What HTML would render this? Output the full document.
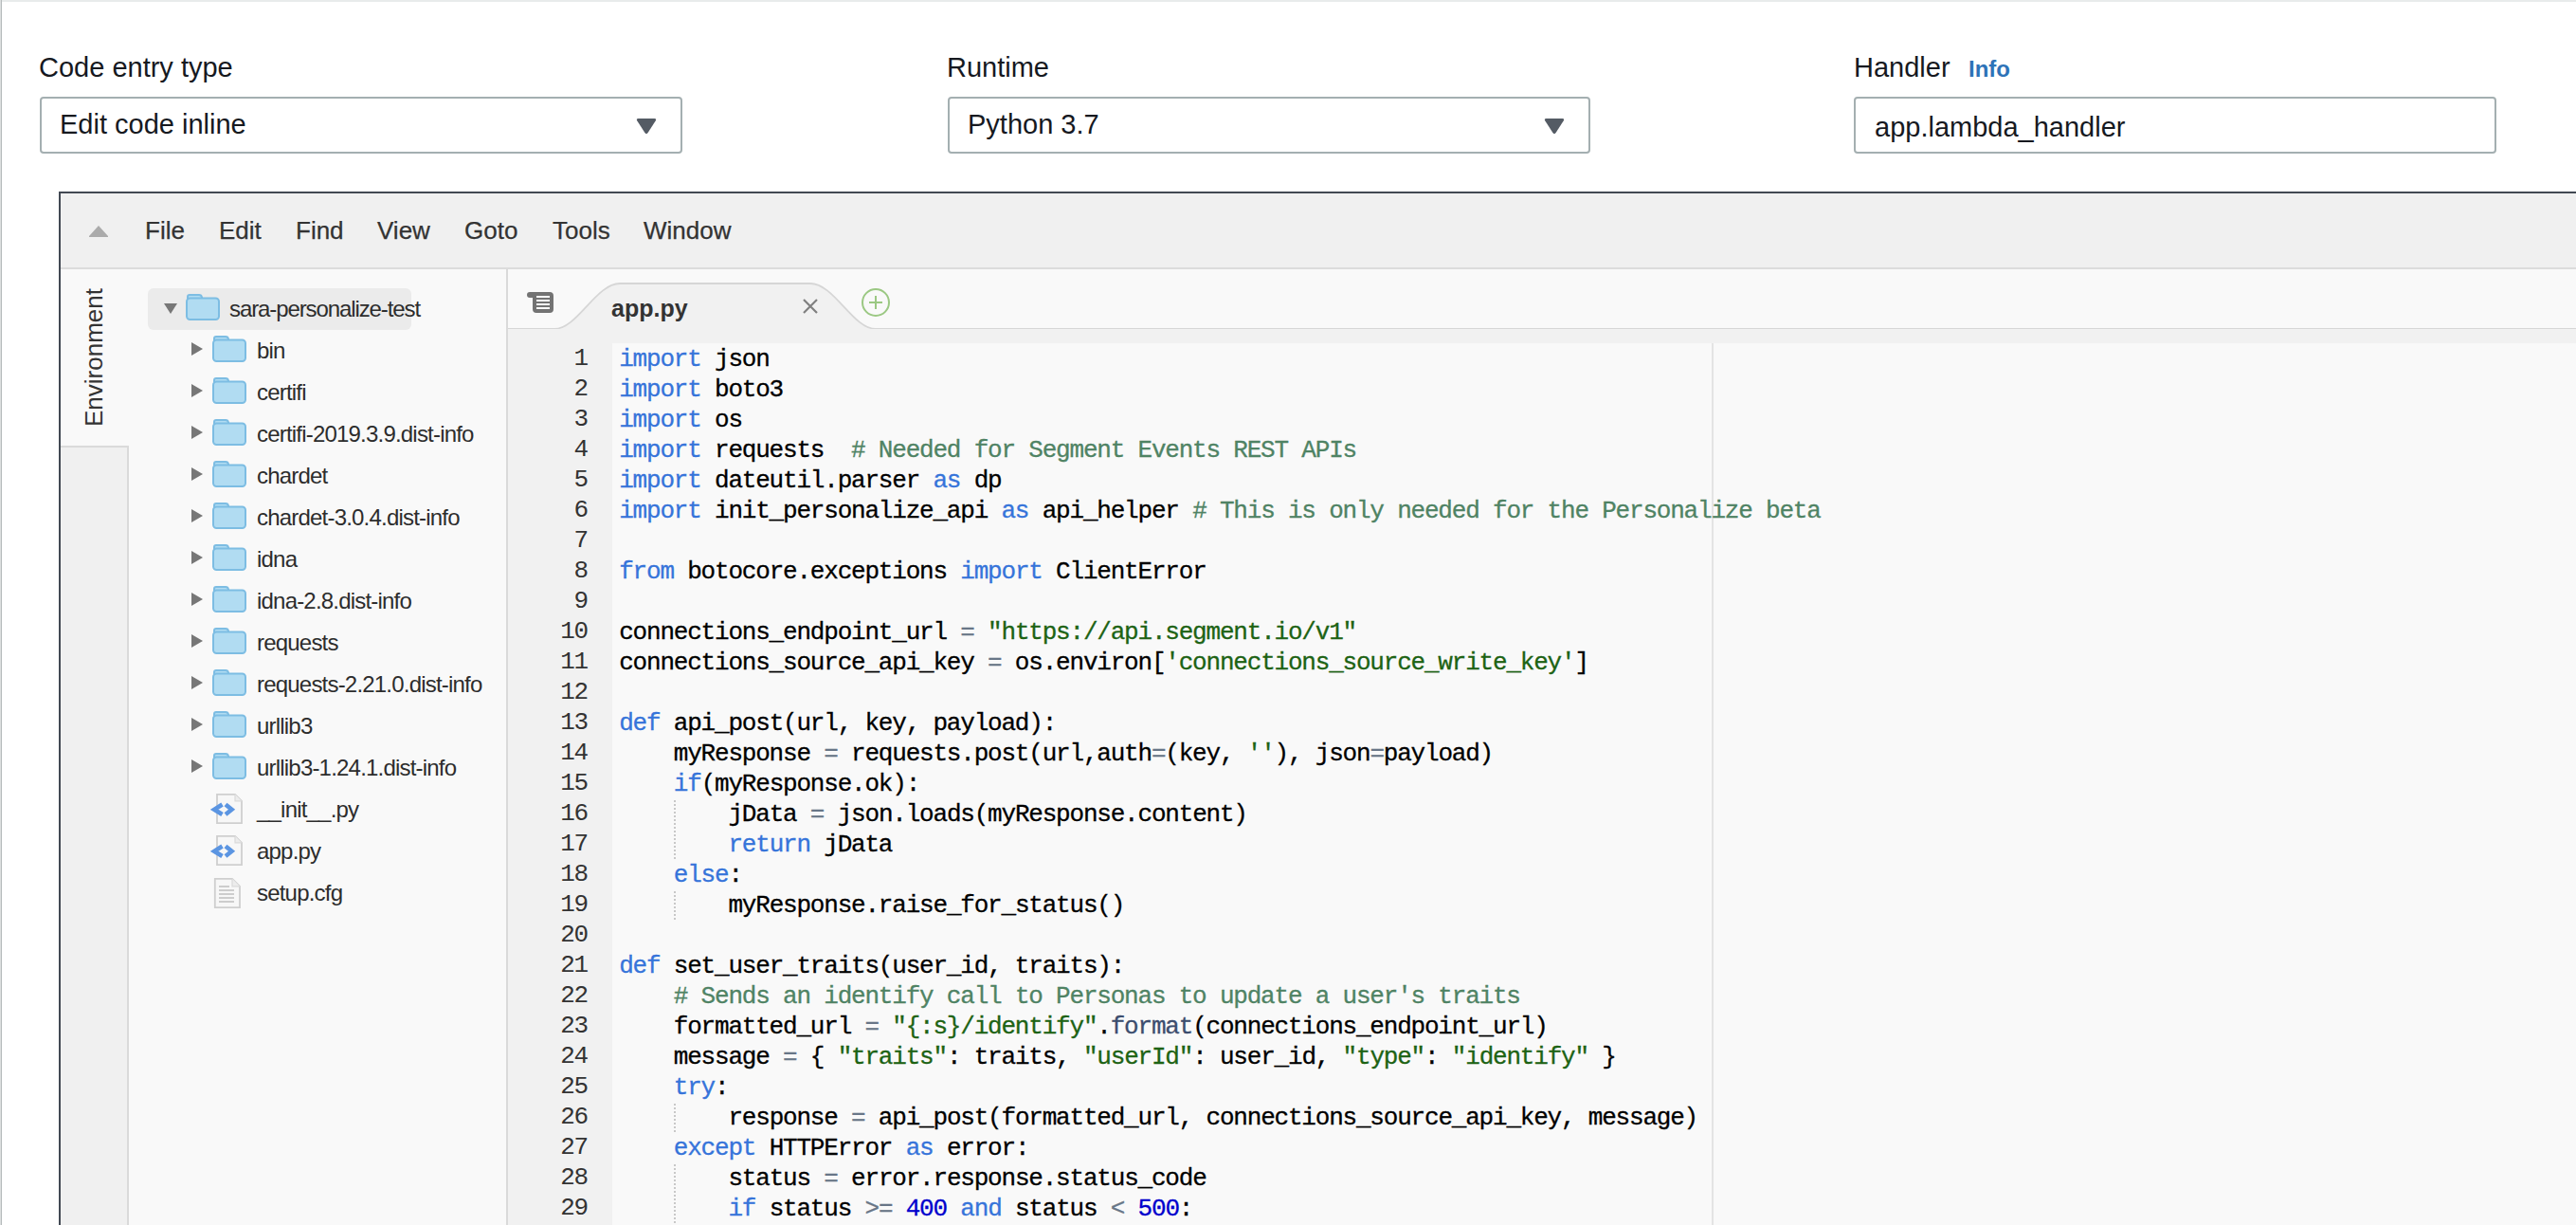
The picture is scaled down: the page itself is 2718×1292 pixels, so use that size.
<!DOCTYPE html>
<html><head><meta charset="utf-8"><style>
html,body{margin:0;padding:0}
body{width:2718px;height:1292px;overflow:hidden;background:#fff;position:relative;font-family:"Liberation Sans",sans-serif}
.abs{position:absolute}
.lbl{position:absolute;font-size:29px;color:#16191f;line-height:34px;white-space:nowrap}
.box{position:absolute;top:102px;width:674px;height:56px;border:2px solid #a4afb1;border-radius:4px;background:#fff}
.box .v{position:absolute;left:19px;top:10px;font-size:29px;line-height:34px;color:#16191f;white-space:nowrap}
.arr{position:absolute;top:19px}
#ide{position:absolute;left:62px;top:202px;width:2656px;height:1090px;border-left:2px solid #424953;border-top:2px solid #424953;background:#f9f9f9;overflow:hidden}
#menu{position:absolute;left:0;top:0;right:0;height:78px;background:#f0f0f0;border-bottom:2px solid #dcdcdc}
.mi{position:absolute;top:24px;font-size:26px;line-height:30px;color:#333;white-space:nowrap;-webkit-text-stroke:0.25px #333}
#strip{position:absolute;left:0;top:266px;width:72px;height:900px;background:#f0f0f0;border-top:2px solid #dadada;border-right:2px solid #dadada;box-sizing:border-box}
#envtxt{position:absolute;left:20px;top:246px;transform-origin:0 0;transform:rotate(-90deg);font-size:26px;line-height:30px;color:#333;white-space:nowrap}
#tree{position:absolute;left:72px;top:80px;width:398px;height:1100px}
#sep{position:absolute;left:470px;top:80px;width:2px;height:1100px;background:#dadada}
.sel{position:absolute;width:278px;height:44px;background:#ebebeb;border-radius:6px}
.tri-d{position:absolute;width:0;height:0;border-left:7px solid transparent;border-right:7px solid transparent;border-top:11px solid #777}
.tri-r{position:absolute;width:0;height:0;border-top:7px solid transparent;border-bottom:7px solid transparent;border-left:12px solid #777}
.ic{position:absolute;line-height:0}
.tl{position:absolute;font-size:24px;line-height:44px;color:#2d2d2d;white-space:nowrap;letter-spacing:-0.8px}
#tabbar{position:absolute;left:472px;top:80px;right:0;height:64px;background:#f9f9f9}
#gutter{position:absolute;left:472px;top:143px;width:110px;height:1000px;background:#f1f1f1}
#gutbg2{position:absolute;left:582px;top:143px;right:0;height:15px;background:#f1f1f1}
#codebg{position:absolute;left:582px;top:158px;right:0;height:1000px;background:#f9f9f9;border-top-left-radius:6px}
.gn{height:32px;line-height:32px;text-align:right;font-family:"Liberation Mono",monospace;font-size:26px;letter-spacing:-1.2px;color:#333}
#gnums{position:absolute;left:472px;top:158px;width:84px}
#code{position:absolute;left:589.2px;top:159px;font-family:"Liberation Mono",monospace;font-size:26px;letter-spacing:-1.2px;color:#000;white-space:pre;-webkit-text-stroke:0.3px currentColor}
.ln{height:32px;line-height:32px}
.k{color:#3674da}
.s{color:#1d6314}
.c{color:#4f8364}
.n{color:#0000cd}
.o{color:#687687}
.f{color:#3c4d6e}
.ig{background-image:linear-gradient(#c8c8c8 50%, transparent 50%);background-size:1.5px 4px;background-repeat:repeat-y;background-position:left top}
#margin{position:absolute;left:1742px;top:158px;width:2px;height:1000px;background:#e4e4e4}
</style></head><body>
<div class="abs" style="left:0;top:0;width:2718px;height:2px;background:#e8ebeb"></div>
<div class="abs" style="left:0;top:0;width:1px;height:1292px;background:#dcdfdf"></div>
<div class="abs" style="left:1px;top:0;width:1px;height:1292px;background:#b6bbbc"></div>

<div class="lbl" style="left:41px;top:54px">Code entry type</div>
<div class="box" style="left:42px"><div class="v">Edit code inline</div>
<svg class="arr" style="left:626px" width="24" height="20" viewBox="0 0 24 20"><path d="M3.5 2 L20.5 2 Q23 2 21.8 4.2 L13.6 17 Q12 19.3 10.4 17 L2.2 4.2 Q1 2 3.5 2Z" fill="#545b64"/></svg></div>

<div class="lbl" style="left:999px;top:54px">Runtime</div>
<div class="box" style="left:1000px"><div class="v">Python 3.7</div>
<svg class="arr" style="left:626px" width="24" height="20" viewBox="0 0 24 20"><path d="M3.5 2 L20.5 2 Q23 2 21.8 4.2 L13.6 17 Q12 19.3 10.4 17 L2.2 4.2 Q1 2 3.5 2Z" fill="#545b64"/></svg></div>

<div class="lbl" style="left:1956px;top:54px">Handler</div>
<div class="lbl" style="left:2077px;top:56px;font-size:24px;font-weight:bold;color:#2e73b8">Info</div>
<div class="box" style="left:1956px"><div class="v" style="left:20px;top:13px">app.lambda_handler</div></div>

<div id="ide">
  <div id="menu">
    <svg class="abs" style="left:28px;top:33px" width="24" height="15" viewBox="0 0 24 15"><path d="M12 1 L22 12 L22 13 L2 13 L2 12 Z" fill="#ababab"/></svg>
    <div class="mi" style="left:89px">File</div>
    <div class="mi" style="left:167px">Edit</div>
    <div class="mi" style="left:248px">Find</div>
    <div class="mi" style="left:334px">View</div>
    <div class="mi" style="left:426px">Goto</div>
    <div class="mi" style="left:519px">Tools</div>
    <div class="mi" style="left:615px">Window</div>
  </div>
  <div class="abs" style="left:0;top:80px;width:72px;height:188px;background:#f9f9f9"></div>
  <div id="strip"></div>
  <div id="envtxt">Environment</div>
  <div id="tree"><div class="sel" style="top:20px;left:20px"></div>
<div class="tri-d" style="top:36px;left:37px"></div>
<div class="ic" style="top:26px;left:60px"><svg class="fi" width="36" height="28" viewBox="0 0 36 28"><path d="M4 1 L14 1 Q16.6 1 17 3.6 L17 8 L2 8 L2 3 Q2 1 4 1Z" fill="#b1dcf2" stroke="#7dbde3" stroke-width="2"/><rect x="1" y="4.5" width="34" height="22.5" rx="3.5" fill="#b1dcf2" stroke="#7dbde3" stroke-width="2"/></svg></div>
<div class="tl" style="top:20px;left:106px;letter-spacing:-1.1px">sara-personalize-test</div>
<div class="tri-r" style="top:77px;left:66px"></div>
<div class="ic" style="top:70px;left:88px"><svg class="fi" width="36" height="28" viewBox="0 0 36 28"><path d="M4 1 L14 1 Q16.6 1 17 3.6 L17 8 L2 8 L2 3 Q2 1 4 1Z" fill="#b1dcf2" stroke="#7dbde3" stroke-width="2"/><rect x="1" y="4.5" width="34" height="22.5" rx="3.5" fill="#b1dcf2" stroke="#7dbde3" stroke-width="2"/></svg></div>
<div class="tl" style="top:64px;left:135px">bin</div>
<div class="tri-r" style="top:121px;left:66px"></div>
<div class="ic" style="top:114px;left:88px"><svg class="fi" width="36" height="28" viewBox="0 0 36 28"><path d="M4 1 L14 1 Q16.6 1 17 3.6 L17 8 L2 8 L2 3 Q2 1 4 1Z" fill="#b1dcf2" stroke="#7dbde3" stroke-width="2"/><rect x="1" y="4.5" width="34" height="22.5" rx="3.5" fill="#b1dcf2" stroke="#7dbde3" stroke-width="2"/></svg></div>
<div class="tl" style="top:108px;left:135px">certifi</div>
<div class="tri-r" style="top:165px;left:66px"></div>
<div class="ic" style="top:158px;left:88px"><svg class="fi" width="36" height="28" viewBox="0 0 36 28"><path d="M4 1 L14 1 Q16.6 1 17 3.6 L17 8 L2 8 L2 3 Q2 1 4 1Z" fill="#b1dcf2" stroke="#7dbde3" stroke-width="2"/><rect x="1" y="4.5" width="34" height="22.5" rx="3.5" fill="#b1dcf2" stroke="#7dbde3" stroke-width="2"/></svg></div>
<div class="tl" style="top:152px;left:135px">certifi-2019.3.9.dist-info</div>
<div class="tri-r" style="top:209px;left:66px"></div>
<div class="ic" style="top:202px;left:88px"><svg class="fi" width="36" height="28" viewBox="0 0 36 28"><path d="M4 1 L14 1 Q16.6 1 17 3.6 L17 8 L2 8 L2 3 Q2 1 4 1Z" fill="#b1dcf2" stroke="#7dbde3" stroke-width="2"/><rect x="1" y="4.5" width="34" height="22.5" rx="3.5" fill="#b1dcf2" stroke="#7dbde3" stroke-width="2"/></svg></div>
<div class="tl" style="top:196px;left:135px">chardet</div>
<div class="tri-r" style="top:253px;left:66px"></div>
<div class="ic" style="top:246px;left:88px"><svg class="fi" width="36" height="28" viewBox="0 0 36 28"><path d="M4 1 L14 1 Q16.6 1 17 3.6 L17 8 L2 8 L2 3 Q2 1 4 1Z" fill="#b1dcf2" stroke="#7dbde3" stroke-width="2"/><rect x="1" y="4.5" width="34" height="22.5" rx="3.5" fill="#b1dcf2" stroke="#7dbde3" stroke-width="2"/></svg></div>
<div class="tl" style="top:240px;left:135px">chardet-3.0.4.dist-info</div>
<div class="tri-r" style="top:297px;left:66px"></div>
<div class="ic" style="top:290px;left:88px"><svg class="fi" width="36" height="28" viewBox="0 0 36 28"><path d="M4 1 L14 1 Q16.6 1 17 3.6 L17 8 L2 8 L2 3 Q2 1 4 1Z" fill="#b1dcf2" stroke="#7dbde3" stroke-width="2"/><rect x="1" y="4.5" width="34" height="22.5" rx="3.5" fill="#b1dcf2" stroke="#7dbde3" stroke-width="2"/></svg></div>
<div class="tl" style="top:284px;left:135px">idna</div>
<div class="tri-r" style="top:341px;left:66px"></div>
<div class="ic" style="top:334px;left:88px"><svg class="fi" width="36" height="28" viewBox="0 0 36 28"><path d="M4 1 L14 1 Q16.6 1 17 3.6 L17 8 L2 8 L2 3 Q2 1 4 1Z" fill="#b1dcf2" stroke="#7dbde3" stroke-width="2"/><rect x="1" y="4.5" width="34" height="22.5" rx="3.5" fill="#b1dcf2" stroke="#7dbde3" stroke-width="2"/></svg></div>
<div class="tl" style="top:328px;left:135px">idna-2.8.dist-info</div>
<div class="tri-r" style="top:385px;left:66px"></div>
<div class="ic" style="top:378px;left:88px"><svg class="fi" width="36" height="28" viewBox="0 0 36 28"><path d="M4 1 L14 1 Q16.6 1 17 3.6 L17 8 L2 8 L2 3 Q2 1 4 1Z" fill="#b1dcf2" stroke="#7dbde3" stroke-width="2"/><rect x="1" y="4.5" width="34" height="22.5" rx="3.5" fill="#b1dcf2" stroke="#7dbde3" stroke-width="2"/></svg></div>
<div class="tl" style="top:372px;left:135px">requests</div>
<div class="tri-r" style="top:429px;left:66px"></div>
<div class="ic" style="top:422px;left:88px"><svg class="fi" width="36" height="28" viewBox="0 0 36 28"><path d="M4 1 L14 1 Q16.6 1 17 3.6 L17 8 L2 8 L2 3 Q2 1 4 1Z" fill="#b1dcf2" stroke="#7dbde3" stroke-width="2"/><rect x="1" y="4.5" width="34" height="22.5" rx="3.5" fill="#b1dcf2" stroke="#7dbde3" stroke-width="2"/></svg></div>
<div class="tl" style="top:416px;left:135px">requests-2.21.0.dist-info</div>
<div class="tri-r" style="top:473px;left:66px"></div>
<div class="ic" style="top:466px;left:88px"><svg class="fi" width="36" height="28" viewBox="0 0 36 28"><path d="M4 1 L14 1 Q16.6 1 17 3.6 L17 8 L2 8 L2 3 Q2 1 4 1Z" fill="#b1dcf2" stroke="#7dbde3" stroke-width="2"/><rect x="1" y="4.5" width="34" height="22.5" rx="3.5" fill="#b1dcf2" stroke="#7dbde3" stroke-width="2"/></svg></div>
<div class="tl" style="top:460px;left:135px">urllib3</div>
<div class="tri-r" style="top:517px;left:66px"></div>
<div class="ic" style="top:510px;left:88px"><svg class="fi" width="36" height="28" viewBox="0 0 36 28"><path d="M4 1 L14 1 Q16.6 1 17 3.6 L17 8 L2 8 L2 3 Q2 1 4 1Z" fill="#b1dcf2" stroke="#7dbde3" stroke-width="2"/><rect x="1" y="4.5" width="34" height="22.5" rx="3.5" fill="#b1dcf2" stroke="#7dbde3" stroke-width="2"/></svg></div>
<div class="tl" style="top:504px;left:135px">urllib3-1.24.1.dist-info</div>
<div class="ic" style="top:552px;left:86px"><svg class="fi" width="36" height="34" viewBox="0 0 36 34"><path d="M7 1.8 L26 1.8 L33 8.8 L33 32.2 L7 32.2 Z" fill="#f7f7f7" stroke="#cfcfcf" stroke-width="1.8"/><path d="M26 1.8 L26 8.8 L33 8.8" fill="#ececec" stroke="#dadada" stroke-width="1.2"/><path d="M12.5 12.5 L4.2 17.8 L12.5 23" fill="none" stroke="#5b95e2" stroke-width="4.6" stroke-linejoin="miter"/><path d="M16 12.5 L22.5 17.8 L16 23" fill="none" stroke="#5b95e2" stroke-width="4.6" stroke-linejoin="miter"/></svg></div>
<div class="tl" style="top:548px;left:135px">__init__.py</div>
<div class="ic" style="top:596px;left:86px"><svg class="fi" width="36" height="34" viewBox="0 0 36 34"><path d="M7 1.8 L26 1.8 L33 8.8 L33 32.2 L7 32.2 Z" fill="#f7f7f7" stroke="#cfcfcf" stroke-width="1.8"/><path d="M26 1.8 L26 8.8 L33 8.8" fill="#ececec" stroke="#dadada" stroke-width="1.2"/><path d="M12.5 12.5 L4.2 17.8 L12.5 23" fill="none" stroke="#5b95e2" stroke-width="4.6" stroke-linejoin="miter"/><path d="M16 12.5 L22.5 17.8 L16 23" fill="none" stroke="#5b95e2" stroke-width="4.6" stroke-linejoin="miter"/></svg></div>
<div class="tl" style="top:592px;left:135px">app.py</div>
<div class="ic" style="top:641px;left:89px"><svg class="fi" width="30" height="34" viewBox="0 0 30 34"><path d="M1.8 1.8 L20 1.8 L28 9.8 L28 32.2 L1.8 32.2 Z" fill="#f7f7f7" stroke="#cfcfcf" stroke-width="1.8"/><path d="M20 1.8 L20 9.8 L28 9.8" fill="#ececec" stroke="#dadada" stroke-width="1.2"/><path d="M6 10 L17 10 M6 14 L22 14 M6 18 L22 18 M6 22 L22 22 M6 26 L22 26" stroke="#cdcdcd" stroke-width="2"/></svg></div>
<div class="tl" style="top:636px;left:135px">setup.cfg</div></div>
  <div id="sep"></div>
  <div id="tabbar">
    <svg class="abs" style="left:0;top:0" width="2300" height="66" viewBox="0 0 2300 66">
      <path d="M0 63 L49 63 C 73 63, 93 15, 118 15 L 319 15 C 344 15, 364 63, 388 63 L2300 63 L2300 66 L0 66 Z" fill="#f1f1f1"/>
      <path d="M0 63 L49 63 C 73 63, 93 15, 118 15 L 319 15 C 344 15, 364 63, 388 63 L2300 63" fill="none" stroke="#d6d6d6" stroke-width="1.8"/>
    </svg>
    <svg class="abs" style="left:18px;top:20px" width="30" height="26" viewBox="0 0 30 26"><path d="M5 4 L26 4 Q30 4 30 8 L30 22 Q30 26 26 26 L12 26 Q8 26 8 22 L8 10 L5 10 Q2 10 2 7 Q2 4 5 4Z" fill="#737373"/><path d="M12 9 H26 M12 13 H26 M12 17 H26 M12 21 H26" stroke="#f9f9f9" stroke-width="2"/></svg>
    <div class="abs" style="left:109px;top:19px;font-size:25px;font-weight:bold;color:#333;line-height:44px">app.py</div>
    <svg class="abs" style="left:311px;top:31px" width="16" height="16" viewBox="0 0 16 16"><path d="M1 1 L15 15 M15 1 L1 15" stroke="#808080" stroke-width="2.2"/></svg>
    <svg class="abs" style="left:372px;top:19px" width="32" height="32" viewBox="0 0 32 32"><circle cx="16" cy="16" r="14" fill="none" stroke="#9bc883" stroke-width="2"/><path d="M16 9 V23 M9 16 H23" stroke="#9bc883" stroke-width="2"/></svg>
  </div>
  <div id="gutter"></div>
  <div id="gutbg2"></div>
  <div id="codebg"></div>
  <div id="margin"></div>
  <div id="gnums"><div class="gn">1</div><div class="gn">2</div><div class="gn">3</div><div class="gn">4</div><div class="gn">5</div><div class="gn">6</div><div class="gn">7</div><div class="gn">8</div><div class="gn">9</div><div class="gn">10</div><div class="gn">11</div><div class="gn">12</div><div class="gn">13</div><div class="gn">14</div><div class="gn">15</div><div class="gn">16</div><div class="gn">17</div><div class="gn">18</div><div class="gn">19</div><div class="gn">20</div><div class="gn">21</div><div class="gn">22</div><div class="gn">23</div><div class="gn">24</div><div class="gn">25</div><div class="gn">26</div><div class="gn">27</div><div class="gn">28</div><div class="gn">29</div></div>
  <div id="code"><div class="ln"><span class="k">import</span> json</div><div class="ln"><span class="k">import</span> boto3</div><div class="ln"><span class="k">import</span> os</div><div class="ln"><span class="k">import</span> requests  <span class="c"># Needed for Segment Events REST APIs</span></div><div class="ln"><span class="k">import</span> dateutil.parser <span class="k">as</span> dp</div><div class="ln"><span class="k">import</span> init_personalize_api <span class="k">as</span> api_helper <span class="c"># This is only needed for the Personalize beta</span></div><div class="ln">&nbsp;</div><div class="ln"><span class="k">from</span> botocore.exceptions <span class="k">import</span> ClientError</div><div class="ln">&nbsp;</div><div class="ln">connections_endpoint_url <span class="o">=</span> <span class="s">&quot;https://api.segment.io/v1&quot;</span></div><div class="ln">connections_source_api_key <span class="o">=</span> os.environ[<span class="s">&#x27;connections_source_write_key&#x27;</span>]</div><div class="ln">&nbsp;</div><div class="ln"><span class="k">def</span> api_post(url, key, payload):</div><div class="ln">    myResponse <span class="o">=</span> requests.post(url,auth<span class="o">=</span>(key, <span class="s">&#x27;&#x27;</span>), json<span class="o">=</span>payload)</div><div class="ln">    <span class="k">if</span>(myResponse.ok):</div><div class="ln">    <span class="ig">    </span>jData <span class="o">=</span> json.loads(myResponse.content)</div><div class="ln">    <span class="ig">    </span><span class="k">return</span> jData</div><div class="ln">    <span class="k">else</span>:</div><div class="ln">    <span class="ig">    </span>myResponse.raise_for_status()</div><div class="ln">&nbsp;</div><div class="ln"><span class="k">def</span> set_user_traits(user_id, traits):</div><div class="ln">    <span class="c"># Sends an identify call to Personas to update a user&#x27;s traits</span></div><div class="ln">    formatted_url <span class="o">=</span> <span class="s">&quot;{:s}/identify&quot;</span>.<span class="f">format</span>(connections_endpoint_url)</div><div class="ln">    message <span class="o">=</span> { <span class="s">&quot;traits&quot;</span>: traits, <span class="s">&quot;userId&quot;</span>: user_id, <span class="s">&quot;type&quot;</span>: <span class="s">&quot;identify&quot;</span> }</div><div class="ln">    <span class="k">try</span>:</div><div class="ln">    <span class="ig">    </span>response <span class="o">=</span> api_post(formatted_url, connections_source_api_key, message)</div><div class="ln">    <span class="k">except</span> HTTPError <span class="k">as</span> error:</div><div class="ln">    <span class="ig">    </span>status <span class="o">=</span> error.response.status_code</div><div class="ln">    <span class="ig">    </span><span class="k">if</span> status <span class="o">&gt;=</span> <span class="n">400</span> <span class="k">and</span> status <span class="o">&lt;</span> <span class="n">500</span>:</div></div>
</div>
</body></html>
